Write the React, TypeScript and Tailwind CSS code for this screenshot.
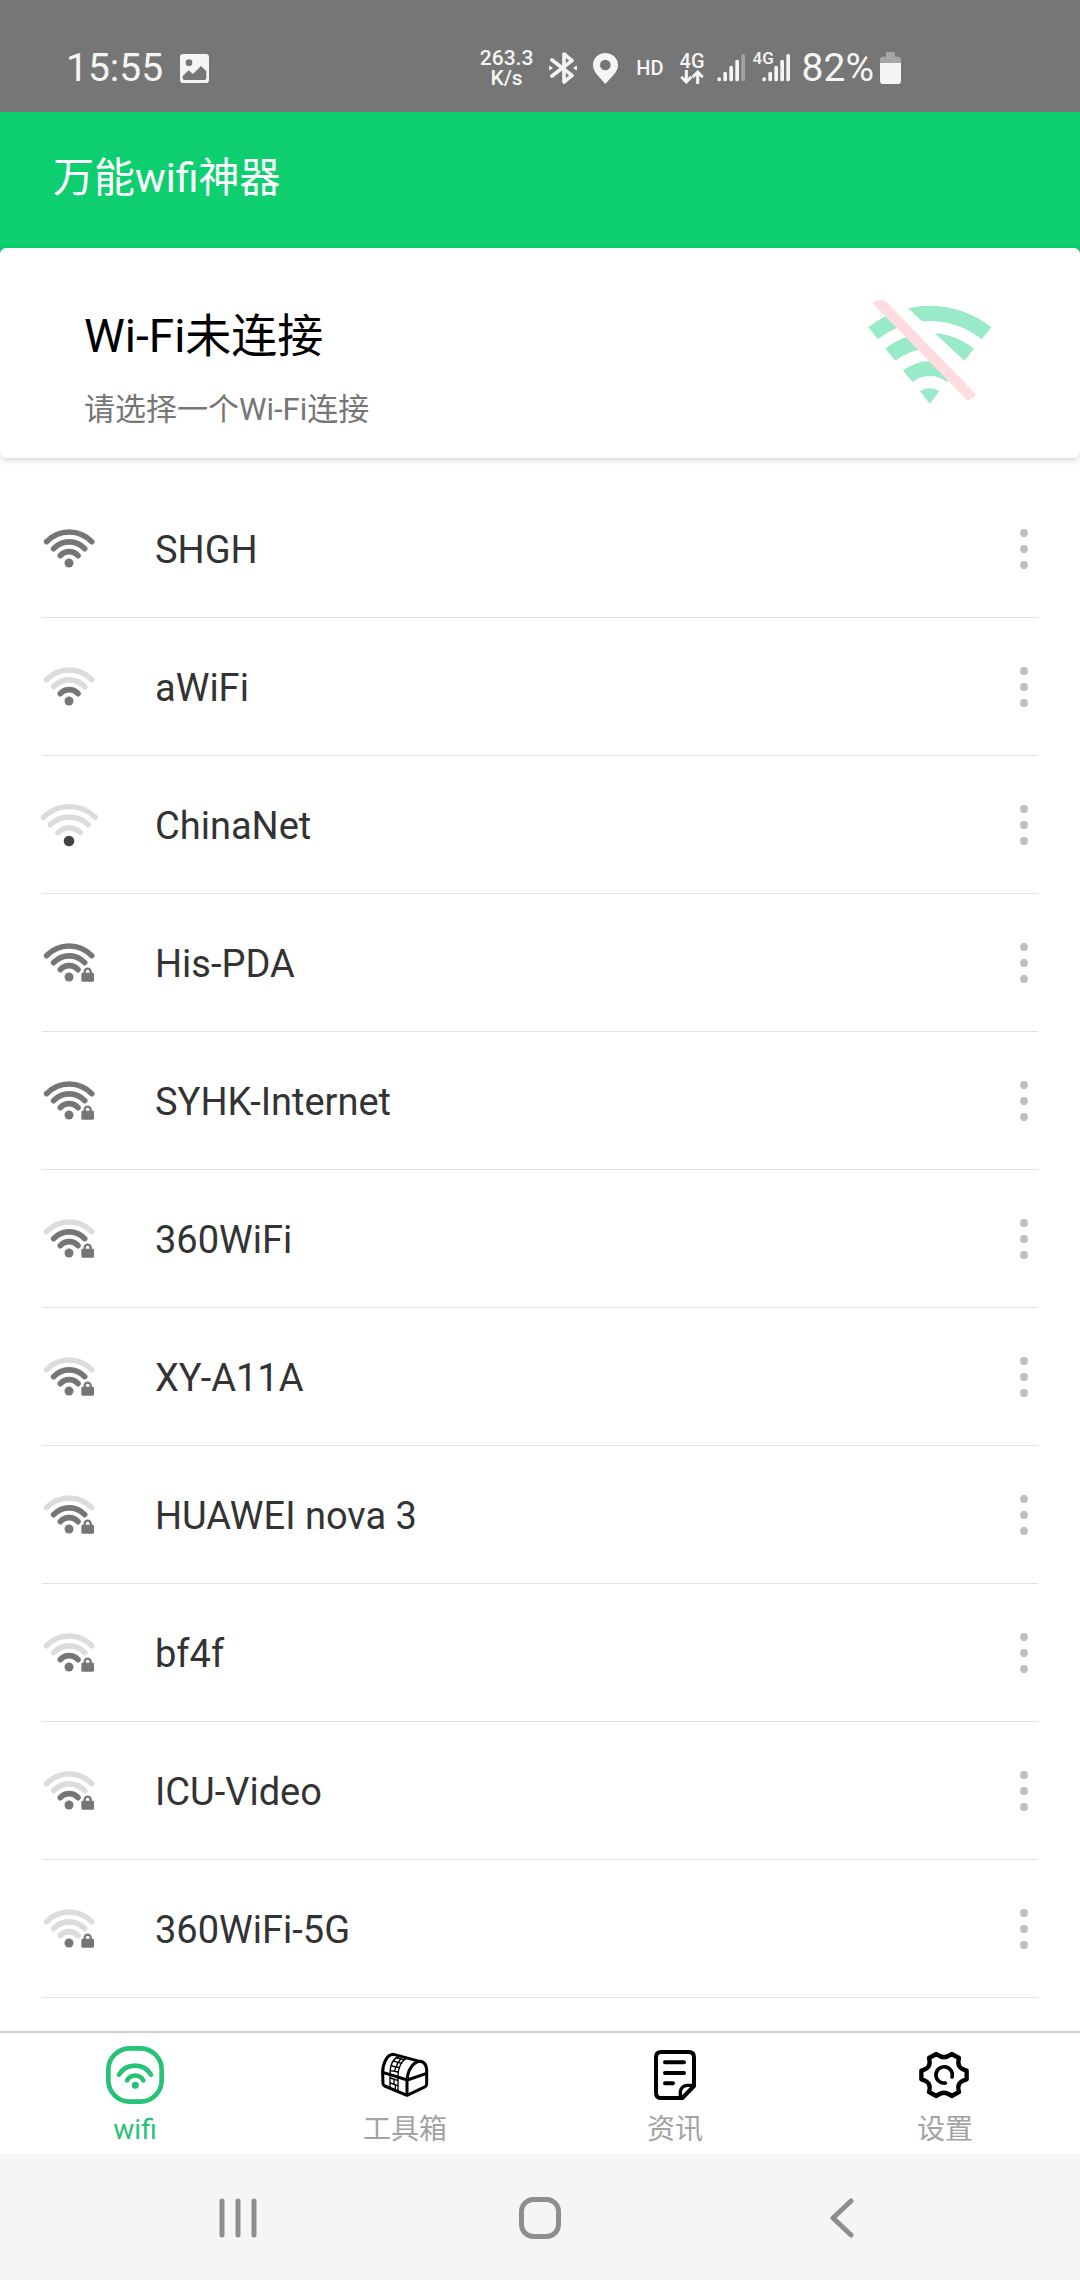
import React, { useState } from 'react'

type Network = { ssid: string; level: number; locked: boolean }

const NETWORKS: Network[] = [
  { ssid: 'SHGH', level: 3, locked: false },
  { ssid: 'aWiFi', level: 1, locked: false },
  { ssid: 'ChinaNet', level: 0, locked: false },
  { ssid: 'His-PDA', level: 3, locked: true },
  { ssid: 'SYHK-Internet', level: 3, locked: true },
  { ssid: '360WiFi', level: 2, locked: true },
  { ssid: 'XY-A11A', level: 2, locked: true },
  { ssid: 'HUAWEI nova 3', level: 2, locked: true },
  { ssid: 'bf4f', level: 1, locked: true },
  { ssid: 'ICU-Video', level: 1, locked: true },
  { ssid: '360WiFi-5G', level: 0, locked: true },
]

const ON = '#767676'
const OFF = '#dcdcdc'

const SignalIcon: React.FC<{ level: number; locked: boolean }> = ({ level, locked }) => {
  // open network with no signal uses the wider glyph
  if (level === 0 && !locked) {
    return (
      <svg viewBox="61 907 174 132" className="w-[58px] h-11 shrink-0" fill="none" stroke={OFF} strokeWidth="16" strokeLinecap="round">
        <path d="M71 950A111 111 0 0 1 227 950" />
        <path d="M92 972A81 81 0 0 1 205 972" />
        <path d="M115 996A47 47 0 0 1 182 996" />
        <circle cx="148" cy="1021" r="16" fill="#444" stroke="none" />
      </svg>
    )
  }
  return (
    <svg viewBox="66 87 162 117" className="w-[54px] h-[39px] shrink-0" fill="none" strokeWidth="17" strokeLinecap="round">
      <path d="M80 125A93 93 0 0 1 215 125" stroke={level >= 3 ? ON : OFF} />
      <path d="M101 146A63 63 0 0 1 194 146" stroke={level >= 2 ? ON : OFF} />
      <path d="M121 167A35 35 0 0 1 174 167" stroke={level >= 1 ? ON : OFF} />
      <circle cx="147" cy="189" r="13.5" fill={ON} />
      {locked && (
        <g>
          <path d="M186 180V172a17 17 0 0 1 34 0V204H184z" fill="#fff" stroke="#fff" strokeWidth="4" />
          <rect x="184" y="176" width="38" height="27" rx="4" fill={ON} />
          <path d="M194 178v-5a9 9 0 0 1 18 0v5" stroke={ON} strokeWidth="7" />
        </g>
      )}
    </svg>
  )
}

const Bars: React.FC<{ weak?: boolean }> = ({ weak }) => (
  <svg viewBox="0 0 84 84" className="w-7 h-7" fill="currentColor">
    <rect x="1" y="70" width="11" height="12" rx="5" />
    <rect x="19" y="53" width="11" height="29" rx="5" />
    <rect x="37" y="35" width="11" height="47" rx="5" />
    <rect x="55" y="17" width="11" height="65" rx="5" />
    <rect x="73" y="0" width="11" height="82" rx="5" opacity={weak ? 0.35 : 1} />
  </svg>
)

const StatusBar = () => (
  <div className="h-28 pt-6 pl-[66px] pr-[179px] flex items-center bg-[#767676] text-[#f5f5f5]">
    <span className="text-[39px] leading-10">15:55</span>
    <svg viewBox="0 0 87 87" className="w-[29px] h-[29px] ml-[17px]">
      <rect width="87" height="87" rx="10" fill="currentColor" />
      <circle cx="27" cy="26" r="10" fill="#767676" />
      <path d="M8 66L26 49L39 60L63 36L79 52V72q0 6-6 6H14q-6 0-6-6z" fill="#767676" />
    </svg>
    <div className="ml-auto flex items-center">
      <div className="text-[21px] leading-5 font-medium text-center">
        <div>263.3</div>
        <div>K/s</div>
      </div>
      <svg viewBox="0 0 84 96" className="w-7 h-8 ml-4" fill="none" stroke="currentColor" strokeWidth="11" strokeLinecap="round" strokeLinejoin="round">
        <path d="M9 24L69 70L45 90V6L69 26L9 72" />
        <path d="M2 43l8 5-8 5zM82 43l-8 5 8 5z" fill="currentColor" strokeWidth="3" />
      </svg>
      <svg viewBox="0 0 75 93" className="w-[25px] h-[31px] ml-4">
        <path d="M37 0C16 0 0 16 0 36C0 60 24 76 37 93C50 76 75 60 75 36C75 16 58 0 37 0zM37 20a16 16 0 1 1 0 32a16 16 0 1 1 0-32z" fill="currentColor" fillRule="evenodd" />
      </svg>
      <span className="ml-[18px] text-[20px] leading-6 font-medium">HD</span>
      <div className="ml-4 flex flex-col items-center">
        <span className="text-[20px] leading-[18px] font-medium">4G</span>
        <svg viewBox="0 0 70 42" className="w-6 h-[14px]" fill="none" stroke="currentColor" strokeWidth="9">
          <path d="M18 0V36M3 20L18 36L33 20" />
          <path d="M52 42V6M37 22L52 6L67 22" />
        </svg>
      </div>
      <div className="ml-3">
        <Bars weak />
      </div>
      <div className="relative ml-2 pl-[9px]">
        <Bars />
        <span className="absolute -top-1 left-0 text-[17px] leading-4 font-medium">4G</span>
      </div>
      <span className="ml-3 text-[39px] leading-10">82%</span>
      <svg viewBox="0 0 63 96" className="w-[21px] h-8 ml-1.5">
        <path d="M0 33V22q0-8 8-8H18V4q0-4 4-4H41q4 0 4 4V14H55q8 0 8 8V33z" fill="#a6a6a6" />
        <path d="M0 33H63V86q0 10-10 10H10q-10 0-10-10z" fill="currentColor" />
      </svg>
    </div>
  </div>
)

const WifiOffIcon = () => (
  <svg viewBox="147 181 372 312" className="w-[124px] h-[104px] shrink-0">
    <g fill="#98eac8">
      <path d="M148 263A294 294 0 0 1 517 263L488 299A247 247 0 0 0 177 299z" />
      <path d="M199 327A212 212 0 0 1 465 327L436 363A166 166 0 0 0 229 363z" />
      <path d="M252 393A127 127 0 0 1 412 393L383 427A82 82 0 0 0 281 427z" />
      <path d="M303 455Q332 437 361 455L332 492z" />
    </g>
    <path d="M229 170L436 363L520 461L470 500L180 190z" fill="#fff" />
    <path d="M160 190Q171 181 182 182Q196 181 203 187L470 463Q468 475 450 482Q444 482 440 477z" fill="#ffdcdf" />
  </svg>
)

const TABS = [
  {
    key: 'wifi',
    label: 'wifi',
    icon: (
      <svg viewBox="138 108 174 174" className="w-[58px] h-[58px]" fill="none" stroke="#26c276" strokeWidth="14" strokeLinecap="round">
        <rect x="145" y="115" width="160" height="160" rx="64" />
        <path d="M177 194A56 56 0 0 1 273 194" />
        <path d="M201 211A28 28 0 0 1 250 211" />
        <circle cx="226" cy="226" r="10.500" fill="#26c276" stroke="none" />
      </svg>
    ),
  },
  {
    key: 'tools',
    label: '工具箱',
    icon: (
      <svg viewBox="951 108 174 174" className="w-[58px] h-[58px]" fill="none" stroke="#000" strokeWidth="9" strokeLinecap="round" strokeLinejoin="round">
        <path d="M971 187C971 160 984 133 1004 133L1082 154" />
        <path d="M1045 210C1045 181 1062 157 1082 154C1098 155 1104 170 1103 189" />
        <path d="M971 187L1045 210L1103 190" />
        <path d="M971 187L972 222Q973 226 977 228L1044 256L1099 230Q1103 228 1103 222V189M1044 210V256" />
        <g strokeWidth="4">
          <path d="M993 233V192C993 165 1003 145 1022 138M1017 243V198C1017 172 1028 150 1045 144" />
          <path d="M995 182l22 4M999 168l22 5M1006 154l22 6M1015 144l20 5M994 204l22 7M994 219l22 8" />
          <path d="M1007 184l3-13M1012 171l4-12M1018 158l7-12M1005 208v14M1009 225v12" />
        </g>
      </svg>
    ),
  },
  {
    key: 'news',
    label: '资讯',
    icon: (
      <svg viewBox="138 108 174 174" className="w-[58px] h-[58px]" fill="none" stroke="#000" strokeWidth="12" strokeLinecap="round" strokeLinejoin="round">
        <path d="M184 126H266q16 0 16 16V228L247 264H184q-16 0-16-16V142q0-16 16-16z" />
        <path d="M195 157H252M195 189H252M195 220H219" />
        <path d="M241 262V246q2-18 20-20H281" strokeWidth="10" />
      </svg>
    ),
  },
  {
    key: 'settings',
    label: '设置',
    icon: (
      <svg viewBox="-84 -87 174 174" className="w-[58px] h-[58px]" fill="none" stroke="#000" strokeWidth="13" strokeLinecap="round" strokeLinejoin="round">
        <path d="M23 -63L45 -51C39 -30 45 -19 68 -13V13C45 19 39 30 45 51L23 63C6 50 -6 50 -23 63L-45 51C-39 30 -45 19 -68 13V-13C-45 -19 -39 -30 -45 -51L-23 -63C-6 -50 6 -50 23 -63z" />
        <path d="M4 24A24.500 24.500 0 1 1 24 6" strokeWidth="11" />
      </svg>
    ),
  },
]

const SystemBar = () => (
  <div className="h-[126px] pt-0.5 px-[208px] flex items-center justify-between bg-[#f5f5f5]">
    <button aria-label="Recents" className="w-[60px] h-[60px] flex items-center justify-center">
      <svg viewBox="0 0 38 40" className="w-[38px] h-10" stroke="#8e8e8e" strokeWidth="5" strokeLinecap="round">
        <path d="M3 3V37M19 3V37M35 3V37" />
      </svg>
    </button>
    <button aria-label="Home" className="w-[60px] h-[60px] flex items-center justify-center">
      <svg viewBox="0 0 42 42" className="w-[42px] h-[42px]" fill="none" stroke="#8e8e8e" strokeWidth="5">
        <rect x="2.500" y="2.500" width="37" height="37" rx="12" />
      </svg>
    </button>
    <button aria-label="Back" className="w-[60px] h-[60px] flex items-center justify-center">
      <svg viewBox="0 0 24 40" className="w-6 h-10" fill="none" stroke="#8e8e8e" strokeWidth="5" strokeLinecap="round" strokeLinejoin="round">
        <path d="M21 3L3 20L21 37" />
      </svg>
    </button>
  </div>
)

const App: React.FC = () => {
  const [tab, setTab] = useState('wifi')

  return (
    <div className="min-h-screen flex flex-col bg-white font-[Roboto,'Noto_Sans_CJK_SC',sans-serif]">
      <StatusBar />
      <header className="h-36 pb-3 px-[53px] flex items-center bg-[#0ecf6f]">
        <h1 className="text-[41px] leading-[60px] text-white">万能wifi神器</h1>
      </header>

      <section className="relative -mt-2 pt-[52px] pb-[28px] pl-[84px] pr-[88px] flex items-start justify-between rounded-md bg-white shadow-[0_2px_6px_rgba(0,0,0,0.18)]">
        <div className="pt-1 flex flex-col gap-[22px]">
          <h2 className="text-[46px] leading-[64px] text-black">Wi-Fi未连接</h2>
          <p className="text-[31px] leading-10 text-[#767676]">请选择一个Wi-Fi连接</p>
        </div>
        <WifiOffIcon />
      </section>

      <main className="flex-1 pt-[22px] pb-[33px] px-[42px]">
        <ul>
          {NETWORKS.map(n => (
            <li key={n.ssid} className="h-[138px] flex items-center gap-[59px] border-b border-[#e3e3e3]">
              <div className="w-[54px] flex justify-center">
                <SignalIcon level={n.level} locked={n.locked} />
              </div>
              <span className="flex-1 pt-0.5 text-[38px] leading-[48px] text-[#333]">{n.ssid}</span>
              <button aria-label={n.ssid + ' options'} className="w-7 h-16 flex flex-col items-center justify-center gap-2">
                <span className="w-2 h-2 rounded-full bg-[#c0c0c0]" />
                <span className="w-2 h-2 rounded-full bg-[#c0c0c0]" />
                <span className="w-2 h-2 rounded-full bg-[#c0c0c0]" />
              </button>
            </li>
          ))}
        </ul>
      </main>

      <nav className="grid grid-cols-4 pt-[13px] border-t-2 border-[#d0d0d0]">
        {TABS.map(t => (
          <button key={t.key} onClick={() => setTab(t.key)} className="flex flex-col items-center">
            {t.icon}
            <span className={t.key === tab ? 'pt-0.5 text-[28px] leading-[48px] text-[#26c276]' : 'pt-0.5 text-[28px] leading-[48px] text-[#a3a3a3]'}>{t.label}</span>
          </button>
        ))}
      </nav>
      <SystemBar />
    </div>
  )
}

export default App
